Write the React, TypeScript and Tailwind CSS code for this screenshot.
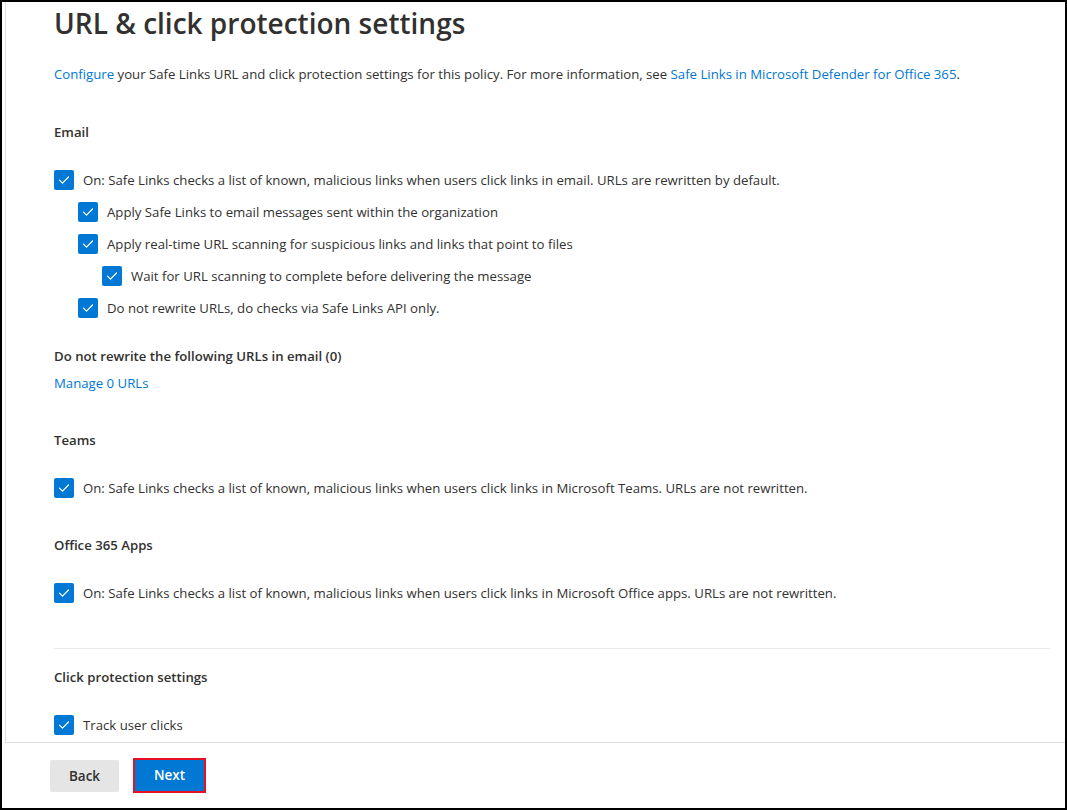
const Check = ({ label }: { label: string }) => (
  <div className="flex h-5 items-center">
    <span className="flex h-5 w-5 shrink-0 items-center justify-center rounded-[2px] bg-[#0078d4]">
      <svg viewBox="0 0 20 20" className="h-5 w-5" fill="none">
        <path d="M5.5 10.2l3 3 6-6.2" stroke="#fff" strokeWidth="1.2" strokeLinecap="round" strokeLinejoin="round" />
      </svg>
    </span>
    <span className="ml-[9px] whitespace-nowrap text-[13.2px] leading-5 text-[#323130]">{label}</span>
  </div>
);

export default function App() {
  return (
    <div className="flex h-[810px] w-[1067px] flex-col border-2 border-black bg-white font-['Segoe_UI','Open_Sans',sans-serif] text-[#323130]">
      <div className="ml-[3px] h-[741px] shrink-0 overflow-hidden border-b border-l border-[#e1dfdd] pl-[48px] pr-[15px]">
        <h1 className="mt-[3px] text-[28px] font-semibold leading-[36px]">URL &amp; click protection settings</h1>
        <p className="mt-[23px] whitespace-nowrap text-[13.2px] leading-5">
          <a className="text-[#0078d4]">Configure</a> your Safe Links URL and click protection settings for this policy. For more information, see{" "}
          <a className="text-[#0078d4]">Safe Links in Microsoft Defender for Office 365</a>.
        </p>

        <h2 className="mt-[38px] text-[13.2px] font-semibold leading-5">Email</h2>
        <div className="mt-[28px] flex flex-col gap-3">
          <Check label="On: Safe Links checks a list of known, malicious links when users click links in email. URLs are rewritten by default." />
          <div className="pl-6">
            <Check label="Apply Safe Links to email messages sent within the organization" />
          </div>
          <div className="pl-6">
            <Check label="Apply real-time URL scanning for suspicious links and links that point to files" />
          </div>
          <div className="pl-12">
            <Check label="Wait for URL scanning to complete before delivering the message" />
          </div>
          <div className="pl-6">
            <Check label="Do not rewrite URLs, do checks via Safe Links API only." />
          </div>
        </div>

        <h3 className="mt-[28px] text-[13.2px] font-semibold leading-5">Do not rewrite the following URLs in email (0)</h3>
        <a className="mt-[7px] block text-[13.2px] leading-5 text-[#0078d4]">Manage 0 URLs</a>

        <h2 className="mt-[37px] text-[13.2px] font-semibold leading-5">Teams</h2>
        <div className="mt-[28px]">
          <Check label="On: Safe Links checks a list of known, malicious links when users click links in Microsoft Teams. URLs are not rewritten." />
        </div>

        <h2 className="mt-[37px] text-[13.2px] font-semibold leading-5">Office 365 Apps</h2>
        <div className="mt-[28px]">
          <Check label="On: Safe Links checks a list of known, malicious links when users click links in Microsoft Office apps. URLs are not rewritten." />
        </div>

        <div className="mt-[45px] h-px bg-[#edebe9]" />

        <h2 className="mt-[18px] text-[13.2px] font-semibold leading-5">Click protection settings</h2>
        <div className="mt-[28px]">
          <Check label="Track user clicks" />
        </div>
      </div>

      <div className="flex gap-[14px] pl-[48px] pt-[17px]">
        <button className="h-8 w-[69px] rounded-[2px] bg-[#e5e5e5] text-[13.5px] font-semibold text-[#323130]" type="button">
          Back
        </button>
        <button className="h-[35px] w-[73px] -translate-y-[2px] border-2 border-[#e81123] bg-[#0078d4] text-[13.5px] font-semibold text-white" type="button">
          Next
        </button>
      </div>
    </div>
  );
}
